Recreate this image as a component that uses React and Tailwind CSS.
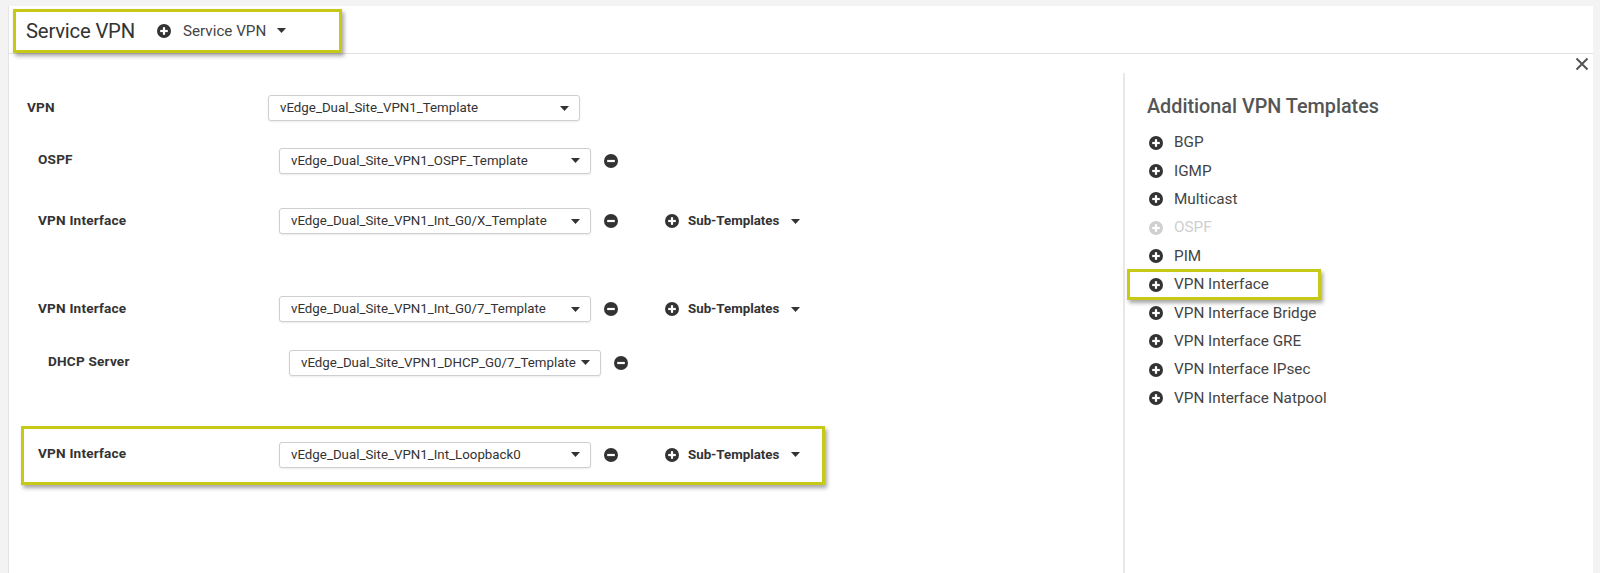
import React from 'react';

const hl = 'border-[3px] border-[#c6ca17] shadow-[2px_3px_4px_rgba(0,0,0,0.35)]';

function PlusIcon({ color = '#333' }) {
  return (
    <svg width="14" height="14" viewBox="0 0 14 14" className="shrink-0">
      <circle cx="7" cy="7" r="7" fill={color} />
      <rect x="3.2" y="5.9" width="7.6" height="2.2" fill="#fff" />
      <rect x="5.9" y="3.2" width="2.2" height="7.6" fill="#fff" />
    </svg>
  );
}

function MinusIcon() {
  return (
    <svg width="14" height="14" viewBox="0 0 14 14" className="shrink-0">
      <circle cx="7" cy="7" r="7" fill="#333" />
      <rect x="3.2" y="5.9" width="7.6" height="2.2" fill="#fff" />
    </svg>
  );
}

function Caret() {
  return (
    <svg width="9" height="5" viewBox="0 0 9 5" className="shrink-0">
      <path d="M0 0 L9 0 L4.5 5 Z" fill="#333" />
    </svg>
  );
}

function Select({ value }) {
  return (
    <div className="w-[312px] h-[26px] border border-[#cfcfcf] rounded-[3px] shadow-[0_1px_2px_rgba(0,0,0,0.08)] flex items-center pl-[11px] pr-[10px] bg-white">
      <span className="flex-1 text-[13.3px] text-[#333] whitespace-nowrap overflow-hidden">{value}</span>
      <Caret />
    </div>
  );
}

function Row({ indent = 0, label, value, remove, sub, className = '' }) {
  return (
    <div className={'flex items-center ' + className} style={{ paddingLeft: indent }}>
      <div className="w-[241px] shrink-0 text-[13.6px] font-bold text-[#333] tracking-[0.2px] -mt-[2px]">{label}</div>
      <Select value={value} />
      {remove && (
        <div className="ml-[13px]">
          <MinusIcon />
        </div>
      )}
      {sub && (
        <div className="flex items-center ml-[47px]">
          <PlusIcon />
          <span className="ml-[9px] text-[13.3px] font-bold text-[#333]">Sub-Templates</span>
          <div className="ml-[12px]">
            <Caret />
          </div>
        </div>
      )}
    </div>
  );
}

const templates = [
  'BGP',
  'IGMP',
  'Multicast',
  'OSPF',
  'PIM',
  'VPN Interface',
  'VPN Interface Bridge',
  'VPN Interface GRE',
  'VPN Interface IPsec',
  'VPN Interface Natpool',
];

export default function App() {
  return (
    <div className="h-[573px] overflow-hidden bg-[#f3f3f3] pl-2 pt-1.5 pr-[7px] font-['Roboto',sans-serif]">
      <div className="bg-white h-full flex flex-col border-l border-[#e4e4e4]">
        {/* header */}
        <div className="h-[48px] shrink-0 border-b border-[#e2e2e2] pl-[4px] pt-[3px]">
          <div className={'w-[329px] h-[44px] flex items-center pl-[10px] ' + hl}>
            <span className="text-[20.3px] text-[#333] tracking-[-0.2px]">Service VPN</span>
            <div className="ml-[22px]">
              <PlusIcon />
            </div>
            <span className="ml-[12px] text-[15.2px] text-[#444]">Service VPN</span>
            <div className="ml-[11px] -mt-[2px]">
              <Caret />
            </div>
          </div>
        </div>

        {/* body */}
        <div className="flex-1 flex relative">
          <div className="absolute top-[3px] right-[4px]">
            <svg width="14" height="14" viewBox="0 0 14 14">
              <path d="M1.5 1.5 L12.5 12.5 M12.5 1.5 L1.5 12.5" stroke="#555" strokeWidth="2" />
            </svg>
          </div>

          <div className="w-[1114px] shrink-0 pl-[18px] pt-[41px]">
            <Row label="VPN" value="vEdge_Dual_Site_VPN1_Template" />
            <Row className="mt-[26.5px]" indent={11} label="OSPF" value="vEdge_Dual_Site_VPN1_OSPF_Template" remove />
            <Row className="mt-[34.5px]" indent={11} label="VPN Interface" value="vEdge_Dual_Site_VPN1_Int_G0/X_Template" remove sub />
            <Row className="mt-[62px]" indent={11} label="VPN Interface" value="vEdge_Dual_Site_VPN1_Int_G0/7_Template" remove sub />
            <Row className="mt-[27.5px]" indent={21} label="DHCP Server" value="vEdge_Dual_Site_VPN1_DHCP_G0/7_Template" remove />
            <div className={'mt-[50px] -ml-[6px] w-[804px] h-[59px] pt-[13px] ' + hl}>
              <Row indent={14} label="VPN Interface" value="vEdge_Dual_Site_VPN1_Int_Loopback0" remove sub />
            </div>
          </div>

          <div className="flex-1 mt-[19px] border-l-2 border-[#e8e8e8] pl-[22px] pt-[21px]">
            <div className="text-[19.8px] leading-[26px] font-medium text-[#555]">Additional VPN Templates</div>
            <div className="mt-[8.5px]">
              {templates.map((t, i) => {
                const off = t === 'OSPF';
                return (
                  <div key={i} className="relative h-[28.4px] flex items-center pl-[2px]">
                    {i === 5 && (
                      <div className={'absolute -left-[20px] -top-[1px] w-[194px] h-[31px] ' + hl} />
                    )}
                    <PlusIcon color={off ? '#d0d0d0' : '#333'} />
                    <span className={'ml-[11px] text-[15.3px] ' + (off ? 'text-[#cfcfcf]' : 'text-[#444]')}>{t}</span>
                  </div>
                );
              })}
            </div>
          </div>
        </div>
      </div>
    </div>
  );
}
